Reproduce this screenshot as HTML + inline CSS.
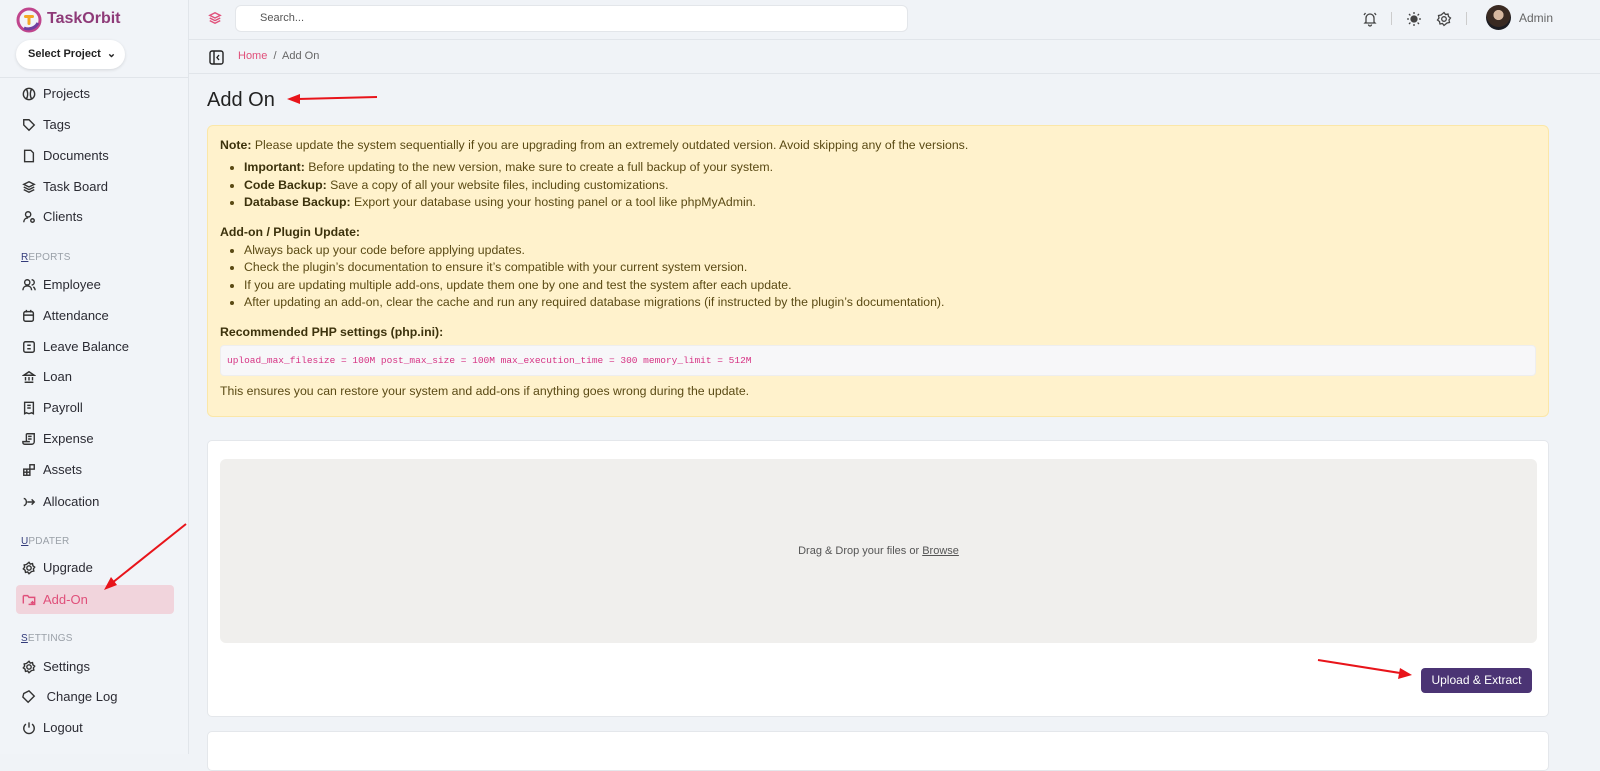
<!DOCTYPE html>
<html><head><meta charset="utf-8"><style>
*{box-sizing:border-box;margin:0;padding:0}
body{width:1600px;height:754px;overflow:hidden;background:#f0f3f7;font-family:"Liberation Sans",sans-serif;color:#333;position:relative}
.sb{position:absolute;left:0;top:0;width:189px;height:754px;border-right:1px solid #e1e5ea;background:#f1f4f8}
.abs{position:absolute}
.nav{position:absolute;left:22px;font-size:13px;color:#2b2b33;display:flex;align-items:center;gap:7px}
.nav svg{width:14px;height:14px;fill:none;stroke:#333;stroke-width:1.6}
.sec{position:absolute;left:21px;font-size:10px;color:#9aa0a8;letter-spacing:.2px}
.sec u{color:#333b7a;text-decoration:underline}
.yel{position:absolute;left:207px;top:125px;width:1342px;height:292px;background:#fff2cc;border:1px solid #fbe7a8;border-radius:6px;font-size:12.3px;color:#5a4a14;padding:12px 12px}
.yel ul{margin-left:24px}
.yel li{line-height:17.5px}
.yel b{color:#3c320c}
</style></head><body>
<div class="sb">
 <svg class="abs" style="left:16px;top:7px" width="26" height="26" viewBox="0 0 26 26"><circle cx="13" cy="13" r="11" fill="none" stroke="#c0458d" stroke-width="3"/><path d="M8 21a11 11 0 0 0 14-5" stroke="#6f3fa0" stroke-width="3" fill="none"/><rect x="8" y="8" width="10" height="3" rx="1.5" fill="#f5a623"/><rect x="11.5" y="8" width="3" height="10" rx="1.5" fill="#f5a623"/></svg>
 <div class="abs" style="left:47px;top:10px;font-size:16px;font-weight:bold;color:#8e3a78">TaskOrbit</div>
 <div class="abs" style="left:16px;top:40px;width:109px;height:29px;background:#fff;border-radius:15px;box-shadow:0 1px 3px rgba(0,0,0,.12);font-size:11px;font-weight:bold;color:#222;line-height:29px;padding-left:12px">Select Project &nbsp;⌄</div>
 <div class="abs" style="left:0;top:77px;width:189px;border-top:1px solid #e1e5ea"></div>
 <div class="nav" style="top:86px"><svg viewBox="0 0 16 16"><circle cx="8" cy="8" r="6.5"/><path d="M5 2.5c2 3 2 8 0 11M11 2.5c-2 3-2 8 0 11"/></svg>Projects</div>
 <div class="nav" style="top:117px"><svg viewBox="0 0 16 16"><path d="M2 2h6l6 6-6 6-6-6z"/></svg>Tags</div>
 <div class="nav" style="top:148px"><svg viewBox="0 0 16 16"><path d="M3 1.5h7l3 3v10H3z"/></svg>Documents</div>
 <div class="nav" style="top:179px"><svg viewBox="0 0 16 16"><path d="M8 2l6 3-6 3-6-3zM2 8l6 3 6-3M2 11l6 3 6-3"/></svg>Task Board</div>
 <div class="nav" style="top:209px"><svg viewBox="0 0 16 16"><circle cx="7" cy="5" r="3"/><path d="M2 14c0-3 2-5 5-5"/><circle cx="12" cy="12" r="2"/></svg>Clients</div>
 <div class="sec" style="top:252px"><u>R</u>EPORTS</div>
 <div class="nav" style="top:277px"><svg viewBox="0 0 16 16"><circle cx="6" cy="5" r="3"/><path d="M1 14c0-3 2-5 5-5s5 2 5 5M11 2a3 3 0 0 1 0 6M13 10c1 1 2 2 2 4"/></svg>Employee</div>
 <div class="nav" style="top:308px"><svg viewBox="0 0 16 16"><rect x="2" y="3" width="11" height="11" rx="2"/><path d="M5 1v3M10 1v3M2 7h11"/></svg>Attendance</div>
 <div class="nav" style="top:339px"><svg viewBox="0 0 16 16"><rect x="2" y="2" width="12" height="12" rx="2"/><path d="M6 6h4M6 10h4"/></svg>Leave Balance</div>
 <div class="nav" style="top:369px"><svg viewBox="0 0 16 16"><path d="M2 6l6-4 6 4zM3 14h10M4 8v4M8 8v4M12 8v4"/></svg>Loan</div>
 <div class="nav" style="top:400px"><svg viewBox="0 0 16 16"><path d="M3 1.5h10v13l-2-1-3 1-3-1-2 1z M6 5h4M6 8h4"/></svg>Payroll</div>
 <div class="nav" style="top:431px"><svg viewBox="0 0 16 16"><path d="M5 2h9v9a3 3 0 0 1-3 3H3a2 2 0 0 1-2-2v-1h8M5 2v9M7 5h4M7 8h4"/></svg>Expense</div>
 <div class="nav" style="top:462px"><svg viewBox="0 0 16 16"><rect x="2" y="7" width="7" height="7"/><rect x="9" y="2" width="5" height="5"/><path d="M2 10.5h7M5.5 7v7"/></svg>Assets</div>
 <div class="nav" style="top:494px"><svg viewBox="0 0 16 16"><path d="M2 4c4 0 4 8 0 8M6 8h8M11 5l3 3-3 3"/></svg>Allocation</div>
 <div class="sec" style="top:536px"><u>U</u>PDATER</div>
 <div class="nav" style="top:560px"><svg viewBox="0 0 16 16"><circle cx="8" cy="8" r="2.5"/><path d="M8 1.5l1.5 2 2.5-.5.5 2.5 2 1.5-1.5 2 .5 2.5-2.5.5L8 14.5l-1.5-2-2.5.5-.5-2.5-2-1.5 1.5-2-.5-2.5 2.5-.5z"/></svg>Upgrade</div>
 <div class="abs" style="left:16px;top:585px;width:158px;height:29px;background:#f1d4dc;border-radius:4px"></div>
 <div class="nav" style="top:592px;color:#e0507a"><svg viewBox="0 0 16 16" style="stroke:#e0507a"><path d="M1.5 3h5l1.5 2h6.5v8h-7M1.5 3v9M10 11h4M12 9v4"/></svg>Add-On</div>
 <div class="sec" style="top:633px"><u>S</u>ETTINGS</div>
 <div class="nav" style="top:659px"><svg viewBox="0 0 16 16"><circle cx="8" cy="8" r="2.5"/><path d="M8 1.5l1.5 2 2.5-.5.5 2.5 2 1.5-1.5 2 .5 2.5-2.5.5L8 14.5l-1.5-2-2.5.5-.5-2.5-2-1.5 1.5-2-.5-2.5 2.5-.5z"/></svg>Settings</div>
 <div class="nav" style="top:689px"><svg viewBox="0 0 16 16"><path d="M8 1l6 6-7 7-6-6 1-4z"/></svg>&nbsp;Change Log</div>
 <div class="nav" style="top:720px"><svg viewBox="0 0 16 16"><path d="M8 1.5v6M4.5 3.5a6 6 0 1 0 7 0"/></svg>Logout</div>
</div>
<div class="abs" style="left:189px;top:0;width:1411px;height:40px;border-bottom:1px solid #e1e5ea"></div>
<svg class="abs" style="left:208px;top:11px" width="14" height="14" viewBox="0 0 16 16" fill="none" stroke="#e0507a" stroke-width="1.6"><path d="M8 2l6 3-6 3-6-3zM2 8l6 3 6-3M2 11l6 3 6-3"/></svg>
<div class="abs" style="left:235px;top:5px;width:673px;height:27px;background:#fff;border:1px solid #e3e6ea;border-radius:6px;font-size:11px;color:#555;line-height:25px;padding-left:24px">Search...</div>
<svg class="abs" style="left:1362px;top:11px" width="16" height="16" viewBox="0 0 16 16" fill="none" stroke="#444" stroke-width="1.3"><path d="M4 11V7a4 4 0 0 1 8 0v4l1 1H3zM6.5 13.5a1.5 1.5 0 0 0 3 0M2 4l1.5-2M14 4l-1.5-2"/></svg>
<div class="abs" style="left:1391px;top:12px;width:1px;height:13px;background:#ccc"></div>
<svg class="abs" style="left:1406px;top:11px" width="16" height="16" viewBox="0 0 16 16" stroke="#444" stroke-width="1.3"><circle cx="8" cy="8" r="3" fill="#444"/><path d="M8 1v2M8 13v2M1 8h2M13 8h2M3 3l1.4 1.4M11.6 11.6L13 13M3 13l1.4-1.4M11.6 4.4L13 3"/></svg>
<svg class="abs" style="left:1436px;top:11px" width="16" height="16" viewBox="0 0 16 16" fill="none" stroke="#444" stroke-width="1.3"><circle cx="8" cy="8" r="2.3"/><path d="M8 1.5l1.5 2 2.5-.5.5 2.5 2 1.5-1.5 2 .5 2.5-2.5.5L8 14.5l-1.5-2-2.5.5-.5-2.5-2-1.5 1.5-2-.5-2.5 2.5-.5z"/></svg>
<div class="abs" style="left:1466px;top:12px;width:1px;height:13px;background:#ccc"></div>
<div class="abs" style="left:1486px;top:5px;width:25px;height:25px;border-radius:50%;background:radial-gradient(circle at 50% 40%,#d8b8a0 0 25%,#3a2a22 27% 60%,#1c1c22 62%);"></div>
<div class="abs" style="left:1519px;top:11px;font-size:12px;color:#666">Admin</div>
<div class="abs" style="left:189px;top:73px;width:1411px;border-top:1px solid #e1e5ea"></div>
<svg class="abs" style="left:209px;top:50px" width="15" height="15" viewBox="0 0 15 15" fill="none" stroke="#222" stroke-width="1.4"><rect x="1" y="1" width="13" height="13" rx="2"/><path d="M5 1v13M10 5l-2 2.5 2 2.5"/></svg>
<div class="abs" style="left:238px;top:50px;font-size:11px;color:#666"><span style="color:#e0507a">Home</span> &nbsp;/&nbsp; Add On</div>
<div class="abs" style="left:207px;top:89px;font-size:20px;color:#222">Add On</div>
<div class="yel">
 <div style="margin-bottom:7px"><b>Note:</b> Please update the system sequentially if you are upgrading from an extremely outdated version. Avoid skipping any of the versions.</div>
 <ul><li><b>Important:</b> Before updating to the new version, make sure to create a full backup of your system.</li><li><b>Code Backup:</b> Save a copy of all your website files, including customizations.</li><li><b>Database Backup:</b> Export your database using your hosting panel or a tool like phpMyAdmin.</li></ul>
 <div style="margin:13px 0 3px"><b>Add-on / Plugin Update:</b></div>
 <ul><li>Always back up your code before applying updates.</li><li>Check the plugin’s documentation to ensure it’s compatible with your current system version.</li><li>If you are updating multiple add-ons, update them one by one and test the system after each update.</li><li>After updating an add-on, clear the cache and run any required database migrations (if instructed by the plugin’s documentation).</li></ul>
 <div style="margin:13px 0 6px"><b>Recommended PHP settings (php.ini):</b></div>
 <div style="background:#f7f7f9;border:1px solid #eee;border-radius:4px;height:31px;line-height:29px;padding-left:6px;font-family:'Liberation Mono',monospace;font-size:9.5px;color:#d63384">upload_max_filesize = 100M post_max_size = 100M max_execution_time = 300 memory_limit = 512M</div>
 <div style="margin-top:8px">This ensures you can restore your system and add-ons if anything goes wrong during the update.</div>
</div>
<div class="abs" style="left:207px;top:440px;width:1342px;height:277px;background:#fff;border:1px solid #e4e7eb;border-radius:5px"></div>
<div class="abs" style="left:220px;top:459px;width:1317px;height:184px;background:#f0efed;border-radius:6px;text-align:center;line-height:184px;font-size:11px;color:#555">Drag &amp; Drop your files or <u>Browse</u></div>
<div class="abs" style="left:1421px;top:668px;width:111px;height:25px;background:#4b3474;border-radius:4px;color:#fff;font-size:12px;line-height:25px;text-align:center">Upload &amp; Extract</div>
<div class="abs" style="left:207px;top:731px;width:1342px;height:40px;background:#fff;border:1px solid #e4e7eb;border-radius:5px"></div>
<svg class="abs" style="left:0;top:0" width="1600" height="754">
<g stroke="#e8141a" stroke-width="2" fill="#e8141a">
<line x1="377" y1="97" x2="298" y2="99"/><path d="M287 99l13-5v10z" stroke="none"/>
<line x1="186" y1="524" x2="112" y2="583"/><path d="M104 590l7-13 6 8z" stroke="none"/>
<line x1="1318" y1="660" x2="1400" y2="673"/><path d="M1412 675l-14 4 2-11z" stroke="none"/>
</g></svg>
</body></html>
